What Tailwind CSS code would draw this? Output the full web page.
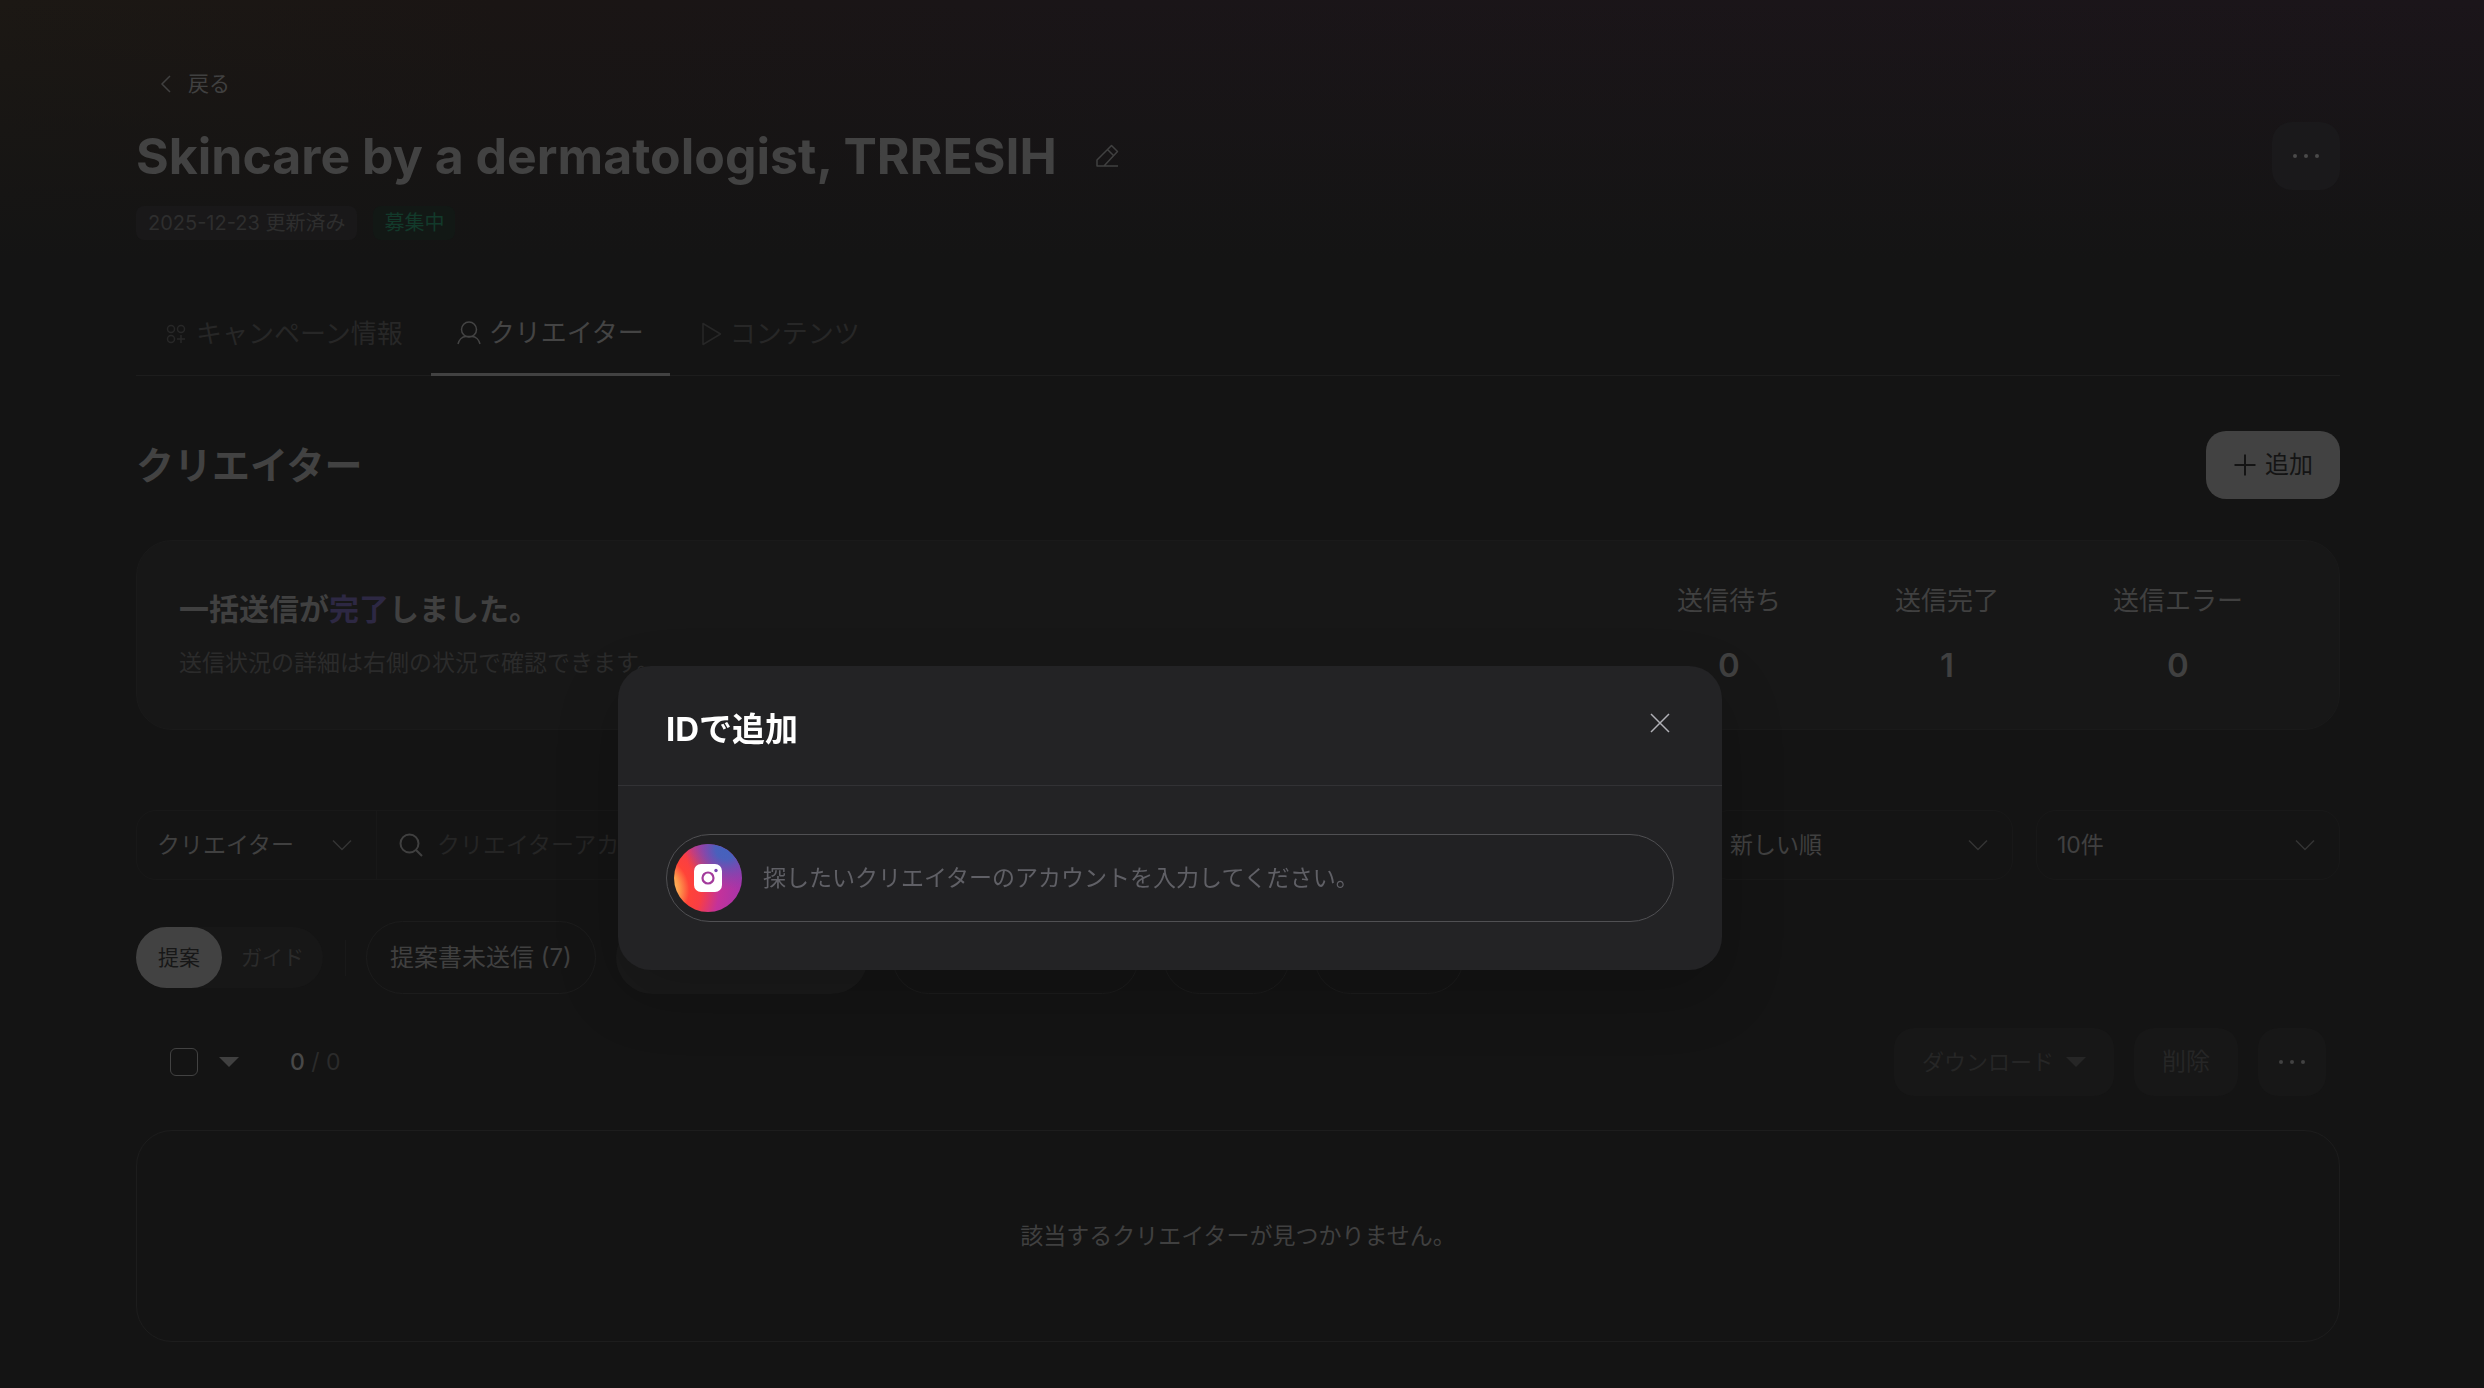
<!DOCTYPE html>
<html lang="ja">
<head>
  <meta charset="UTF-8" />
  <meta name="viewport" content="width=device-width, initial-scale=1.0"/>
  <title>Skincare by a dermatologist, TRRESIH</title>
  <script src="https://cdn.jsdelivr.net/npm/@tailwindcss/browser@4"></script>
</head>
<body class="min-h-screen bg-[#141414] font-['Inter','Noto_Sans_CJK_JP',sans-serif] text-[23px] leading-8 text-[#404040]">

  <div class="min-h-screen bg-[linear-gradient(to_bottom,transparent,#141414_260px),linear-gradient(to_right,#1c1814,#1a1514_20%,#1a1518_45%,#1b151a)]">
    <main class="pl-[136px] pr-36 pt-17 pb-10">

      <!-- Page header -->
      <header>
        <a href="#" class="inline-flex h-8 items-center gap-4 pl-6 text-[21px]">
          <svg class="h-5 w-3" viewBox="0 0 12 20" fill="none" stroke="currentColor" stroke-width="1.5"><path d="M10 2 2 10l8 8"/></svg>
          戻る
        </a>
        <div class="mt-[19px] flex items-center justify-between">
          <div class="flex items-center gap-[38px]">
            <h1 class="text-[50px] leading-[70px] font-bold text-[#424242]">Skincare by a dermatologist, TRRESIH</h1>
            <button type="button" aria-label="名前を編集">
              <svg class="size-6" viewBox="0 0 24 24" fill="none" stroke="currentColor" stroke-width="1.5" stroke-linejoin="round"><path d="M2 22v-6L16.500 1.500l6 6L9 22H2h21M12.500 5.500l6 6"/></svg>
            </button>
          </div>
          <button type="button" aria-label="メニュー" class="flex size-17 items-center justify-center rounded-[20px] bg-[#1a191b] text-[#4a4a4a]">
            <svg class="h-2 w-7" viewBox="0 0 28 8" fill="currentColor"><circle cx="3" cy="4" r="2"/><circle cx="14" cy="4" r="2"/><circle cx="25" cy="4" r="2"/></svg>
          </button>
        </div>
        <div class="mt-[15px] flex gap-4 text-[20px] leading-[34px]">
          <span class="rounded-lg bg-[#191819] px-3 text-[#2e2e2e]">2025-12-23 更新済み</span>
          <span class="rounded-lg bg-[#121815] px-[11px] text-[#123a2b]">募集中</span>
        </div>
      </header>

      <!-- Tabs -->
      <nav class="mt-[52px] flex h-21 border-b border-[#1d1d1d] text-[26px] text-[#272727]">
        <a href="#" class="flex h-21 items-center gap-2 px-7">
          <svg class="size-6" viewBox="0 0 24 24" fill="none" stroke="currentColor" stroke-width="1.500"><circle cx="7" cy="7" r="3.500"/><circle cx="17" cy="7" r="3.500"/><circle cx="7" cy="17" r="3.500"/><path d="M17 13v8M13 17h8"/></svg>
          キャンペーン情報
        </a>
        <a href="#" aria-current="page" class="flex h-21 items-center gap-2 border-b-3 border-[#424242] px-[26px] text-[#444]">
          <svg class="size-6" viewBox="0 0 24 24" fill="none" stroke="currentColor" stroke-width="1.500"><circle cx="12" cy="8.500" r="7.500"/><path d="M1 23c1-4 4-7.500 8-7.500h6c4 0 7 3.500 8 7.500"/></svg>
          クリエイター
        </a>
        <a href="#" class="flex h-21 items-center gap-2 px-7">
          <svg class="size-6" viewBox="0 0 24 24" fill="none" stroke="currentColor" stroke-width="1.500" stroke-linejoin="round"><path d="M5 1.500v21L22.500 12z"/></svg>
          コンテンツ
        </a>
      </nav>

      <section>
        <div class="mt-[55px] flex items-center justify-between">
          <h2 class="text-[38px] leading-[68px] font-bold text-[#424242]">クリエイター</h2>
          <button type="button" class="flex h-17 items-center gap-2 rounded-[20px] bg-[#424242] px-[27px] text-[24px] text-[#141414]">
            <svg class="size-6" viewBox="0 0 24 24" fill="none" stroke="currentColor" stroke-width="2"><path d="M12 1.500v21M1.500 12h21"/></svg>
            追加
          </button>
        </div>

        <!-- Sending status -->
        <div class="mt-[41px] flex items-center justify-between rounded-[36px] border border-[#1a1a1a] bg-[#171717] pl-[42px] pr-24">
          <div>
            <p class="text-[30px] leading-9 font-bold text-[#404040]">一括送信が<span class="text-[#2d2843]">完了</span>しました。</p>
            <p class="mt-5 text-[#2b2b2b]">送信状況の詳細は右側の状況で確認できます。</p>
          </div>
          <dl class="flex gap-[114px] text-center">
            <div class="pt-10 pb-11">
              <dt class="text-[26px] leading-10">送信待ち</dt>
              <dd class="mt-6 text-[33px] leading-10 font-semibold">0</dd>
            </div>
            <div class="pt-10 pb-11">
              <dt class="text-[26px] leading-10">送信完了</dt>
              <dd class="mt-6 text-[33px] leading-10 font-semibold">1</dd>
            </div>
            <div class="pt-10 pb-11">
              <dt class="text-[26px] leading-10">送信エラー</dt>
              <dd class="mt-6 text-[33px] leading-10 font-semibold">0</dd>
            </div>
          </dl>
        </div>

        <!-- Filters -->
        <form class="mt-20 flex gap-[23px]">
          <div class="flex h-[70px] grow items-center rounded-[20px] border border-[#181818]">
            <div class="grid h-full w-60 items-center border-r border-[#181818]">
              <select aria-label="検索対象" class="col-start-1 row-start-1 h-full w-full appearance-none pl-5">
                <option>クリエイター</option>
              </select>
              <svg class="pointer-events-none col-start-1 row-start-1 mr-6 h-3 w-5 justify-self-end text-[#343434]" viewBox="0 0 20 12" fill="none" stroke="currentColor" stroke-width="1.500"><path d="m1 1.500 9 9 9-9"/></svg>
            </div>
            <svg class="ml-[22px] size-6" viewBox="0 0 24 24" fill="none" stroke="currentColor" stroke-width="2"><circle cx="10.500" cy="10.500" r="9"/><path d="m17 17 6 6"/></svg>
            <input type="search" aria-label="クリエイター検索" placeholder="クリエイターアカウントを検索" class="ml-[14px] grow outline-none placeholder:text-[#252525]" />
          </div>
          <div class="grid h-[70px] w-[304px] items-center rounded-[20px] border border-[#181818]">
            <select aria-label="並び順" class="col-start-1 row-start-1 h-full w-full appearance-none pl-5">
              <option>新しい順</option>
            </select>
            <svg class="pointer-events-none col-start-1 row-start-1 mr-6 h-3 w-5 justify-self-end text-[#343434]" viewBox="0 0 20 12" fill="none" stroke="currentColor" stroke-width="1.500"><path d="m1 1.500 9 9 9-9"/></svg>
          </div>
          <div class="grid h-[70px] w-[304px] items-center rounded-[20px] border border-[#181818]">
            <select aria-label="表示件数" class="col-start-1 row-start-1 h-full w-full appearance-none pl-5">
              <option>10件</option>
            </select>
            <svg class="pointer-events-none col-start-1 row-start-1 mr-6 h-3 w-5 justify-self-end text-[#343434]" viewBox="0 0 20 12" fill="none" stroke="currentColor" stroke-width="1.500"><path d="m1 1.500 9 9 9-9"/></svg>
          </div>
        </form>

        <div class="mt-[41px] flex items-center">
          <div class="flex rounded-full bg-[#171717] text-[21px] leading-[61px]">
            <button type="button" class="rounded-full bg-[#424242] px-[22px] text-[#171717]">提案</button>
            <button type="button" class="px-[19px] text-[#2b2b2b]">ガイド</button>
          </div>
          <span class="ml-[22px] h-9 w-px bg-[#191919]"></span>
          <div class="ml-5 flex gap-5 text-[24px]">
            <button type="button" class="h-[73px] rounded-full border border-[#1c1c1c] px-[23px]">提案書未送信 (7)</button>
            <button type="button" class="h-[73px] w-[252px] rounded-full bg-[#1a1a1a]">提案書送信完了 (1)</button>
            <button type="button" class="ml-1 h-[73px] w-[247px] rounded-full border border-[#1c1c1c]">提案書送信失敗 (0)</button>
            <button type="button" class="ml-1 h-[73px] w-[127px] rounded-full border border-[#1c1c1c]">承諾 (0)</button>
            <button type="button" class="ml-1 h-[73px] w-[150px] rounded-full border border-[#1c1c1c]">見送り (0)</button>
          </div>
        </div>

        <!-- List toolbar -->
        <div class="mt-[34px] flex items-center justify-between pl-[34px] pr-3.5">
          <div class="flex items-center">
            <input type="checkbox" aria-label="すべて選択" class="size-7 appearance-none rounded-md border border-[#424242]" />
            <button type="button" aria-label="選択メニュー" class="ml-[21px]">
              <svg class="h-2.5 w-5" viewBox="0 0 20 10" fill="currentColor"><path d="M0 0h20L10 10z"/></svg>
            </button>
            <span class="ml-[51px] text-[#2b2b2b]"><span class="font-medium text-[#484848]">0</span> / 0</span>
          </div>
          <div class="flex gap-5 text-[#262626]">
            <button type="button" class="flex h-17 items-center gap-3 rounded-[20px] bg-[#171717] px-7 text-[22px]">
              ダウンロード
              <svg class="h-2.5 w-5" viewBox="0 0 20 10" fill="currentColor"><path d="M0 0h20L10 10z"/></svg>
            </button>
            <button type="button" class="h-17 rounded-[20px] bg-[#171717] px-7 text-[24px]">削除</button>
            <button type="button" aria-label="その他" class="flex size-17 items-center justify-center rounded-[20px] bg-[#171717] text-[#424242]">
              <svg class="h-2 w-7" viewBox="0 0 28 8" fill="currentColor"><circle cx="3" cy="4" r="2"/><circle cx="14" cy="4" r="2"/><circle cx="25" cy="4" r="2"/></svg>
            </button>
          </div>
        </div>

        <div class="mt-[34px] rounded-[36px] border border-[#1d1d1d] py-[89px] text-center">該当するクリエイターが見つかりません。</div>
      </section>
    </main>
  </div>

  <!-- Add by ID dialog -->
  <div class="fixed inset-0 flex items-center justify-center pt-62 pr-36">
    <div role="dialog" aria-labelledby="dialog-title" class="w-[1104px] rounded-[33px] bg-[#232325] shadow-[0_24px_64px_#00000030]">
      <div class="flex items-start justify-between border-b border-[#323235] pt-[47px] pb-10 pl-12 pr-[52px]">
        <h2 id="dialog-title" class="text-[33px] leading-8 font-bold text-white">IDで追加</h2>
        <button type="button" aria-label="閉じる" class="text-[#b0b0b6]">
          <svg class="size-5" viewBox="0 0 20 20" fill="none" stroke="currentColor" stroke-width="1.500"><path d="m1 1 18 18M19 1 1 19"/></svg>
        </button>
      </div>
      <div class="px-12 py-12">
        <label class="flex h-22 items-center rounded-full border border-[#505053] bg-[#212123] px-[7px]">
          <svg class="size-17" viewBox="0 0 68 68">
            <defs>
              <radialGradient id="warm" gradientUnits="userSpaceOnUse" cx="-18" cy="46" r="90">
                <stop offset="0.180" stop-color="#ffc060"/>
                <stop offset="0.260" stop-color="#fd9a4c"/>
                <stop offset="0.370" stop-color="#ff4338"/>
                <stop offset="0.500" stop-color="#f93e44"/>
                <stop offset="0.700" stop-color="#c4329a"/>
                <stop offset="1" stop-color="#a035ac"/>
              </radialGradient>
              <radialGradient id="cool" gradientUnits="userSpaceOnUse" cx="52" cy="5" r="41">
                <stop offset="0" stop-color="#4462be"/>
                <stop offset="0.250" stop-color="#4a60bc"/>
                <stop offset="1" stop-color="#7a45b0" stop-opacity="0"/>
              </radialGradient>
            </defs>
            <circle cx="34" cy="34" r="34" fill="url(#warm)"/>
            <circle cx="34" cy="34" r="34" fill="url(#cool)"/>
            <rect x="20" y="20" width="28" height="28" rx="7" fill="#fff"/>
            <circle cx="34" cy="34" r="5.500" fill="none" stroke="#a33b9c" stroke-width="2.200"/>
            <circle cx="42" cy="26.500" r="1.700" fill="#7a45b0"/>
          </svg>
          <input type="text" aria-label="アカウント" placeholder="探したいクリエイターのアカウントを入力してください。" class="ml-[21px] grow text-[23px] text-white outline-none placeholder:text-[#606066]" />
        </label>
      </div>
    </div>
  </div>

</body>
</html>
